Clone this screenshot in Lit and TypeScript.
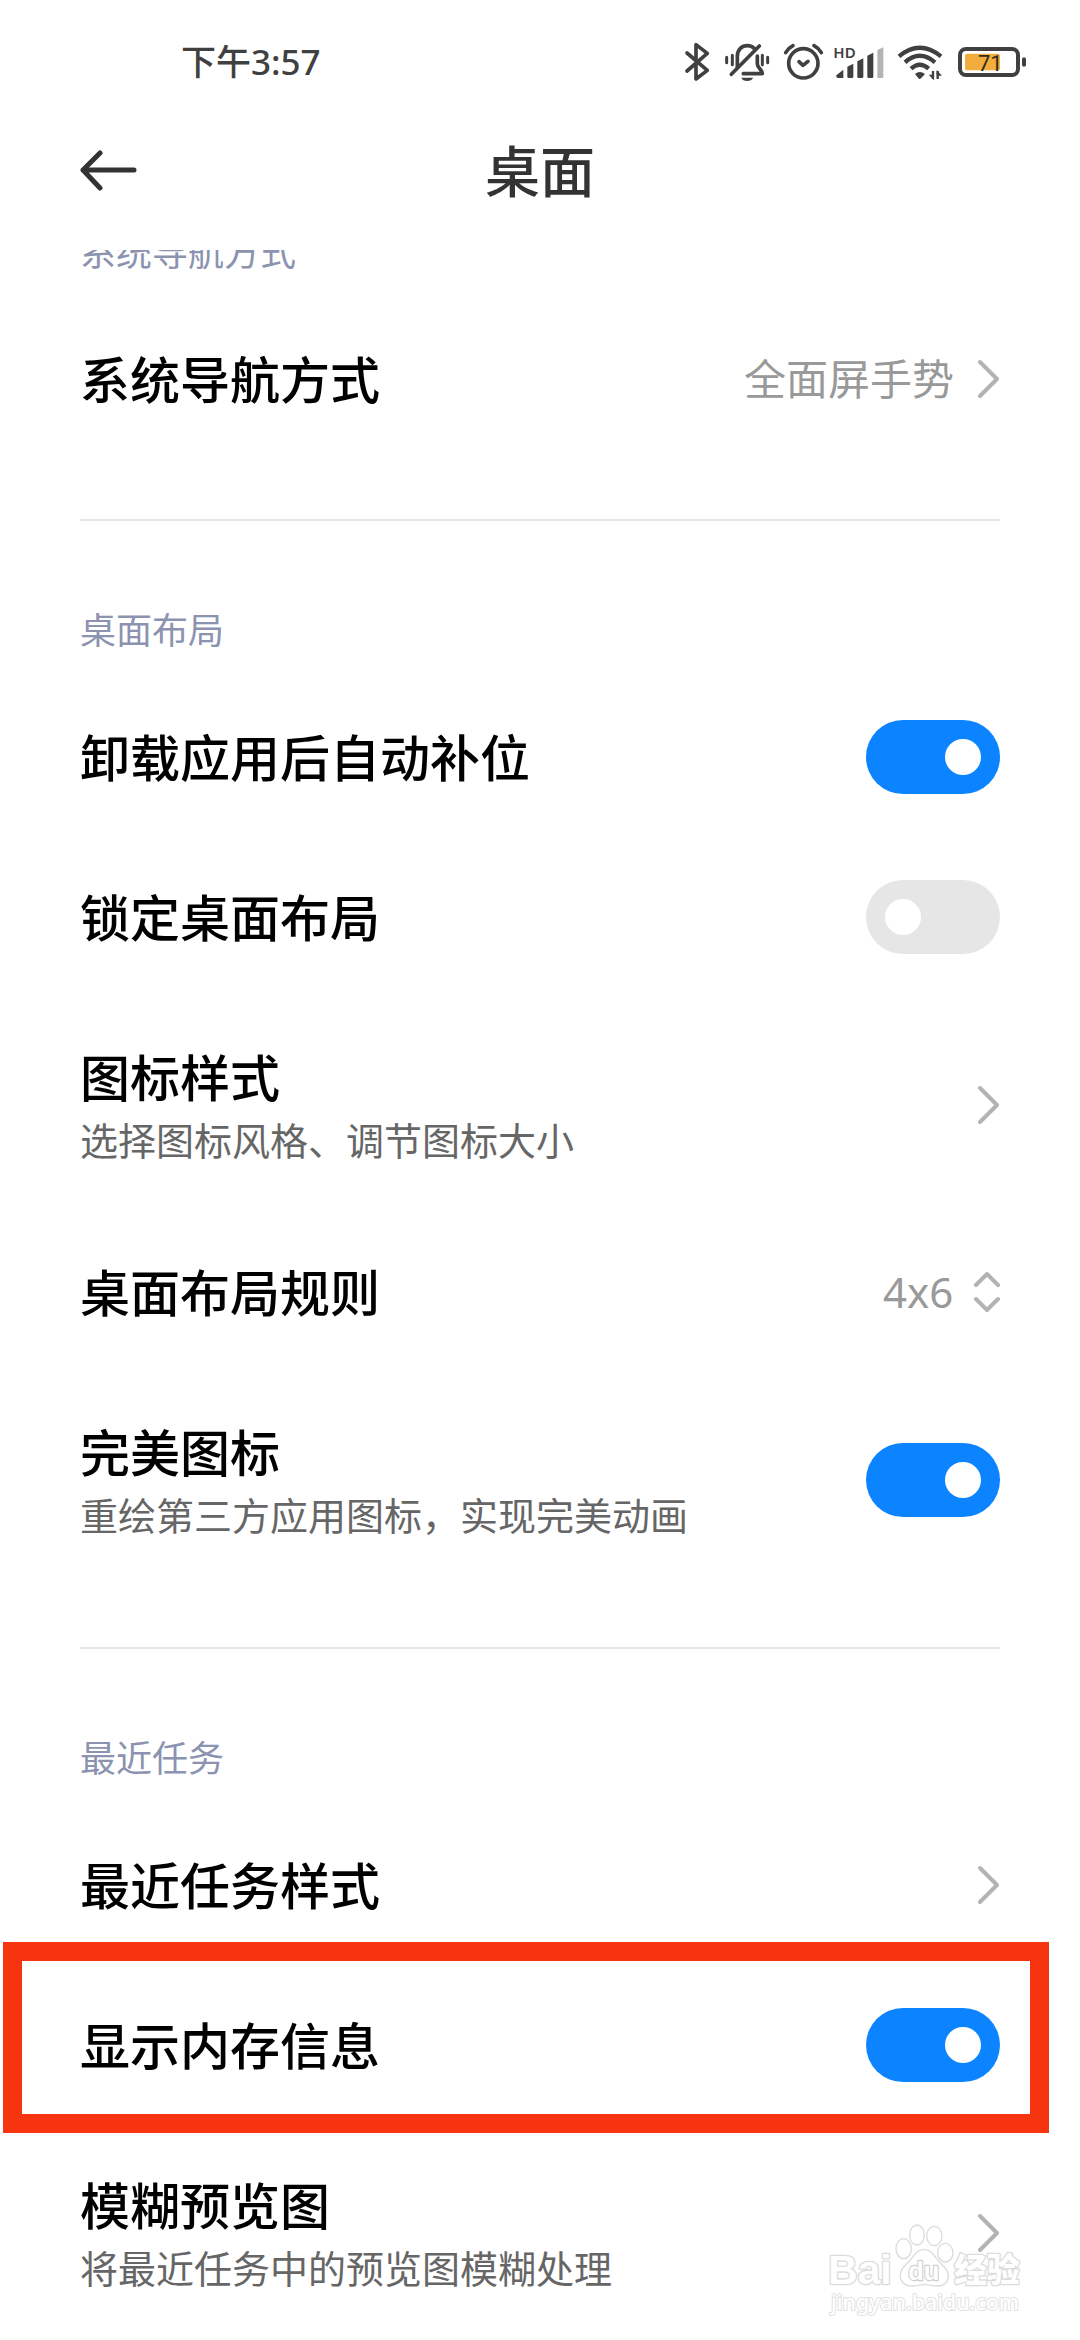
import { LitElement, html, css, svg, nothing, TemplateResult } from "lit";
import { customElement, state } from "lit/decorators.js";

type Row = {
  id: string;
  title: string;
  note?: string;
  kind: "link" | "switch" | "select";
  value?: string;
  marked?: boolean;
};

type Section = { title: string; rows: Row[] };

const SECTIONS: Section[] = [
  {
    title: "系统导航方式",
    rows: [{ id: "navigation", title: "系统导航方式", kind: "link", value: "全面屏手势" }],
  },
  {
    title: "桌面布局",
    rows: [
      { id: "autofill", title: "卸载应用后自动补位", kind: "switch" },
      { id: "lock", title: "锁定桌面布局", kind: "switch" },
      { id: "icons", title: "图标样式", note: "选择图标风格、调节图标大小", kind: "link" },
      { id: "grid", title: "桌面布局规则", kind: "select", value: "4x6" },
      { id: "perfect", title: "完美图标", note: "重绘第三方应用图标，实现完美动画", kind: "switch" },
    ],
  },
  {
    title: "最近任务",
    rows: [
      { id: "recents", title: "最近任务样式", kind: "link" },
      { id: "memory", title: "显示内存信息", kind: "switch", marked: true },
      { id: "blur", title: "模糊预览图", note: "将最近任务中的预览图模糊处理", kind: "link" },
    ],
  },
];

@customElement("status-bar")
export class StatusBar extends LitElement {
  static styles = css`
    :host {
      display: flex;
      align-items: center;
      justify-content: space-between;
      height: 124px;
      padding: 0 53px 0 181px;
      color: #404040;
      font: 500 35px/48px "Noto Sans", "Noto Sans CJK SC", sans-serif;
    }
    .icons {
      display: flex;
      gap: 10px;
    }
    .icon {
      display: block;
      height: 44px;
      fill: none;
      stroke: #404040;
      stroke-width: 11;
      stroke-linecap: round;
      stroke-linejoin: round;
    }
    .solid {
      fill: #404040;
      stroke: none;
    }
    .faint {
      fill: #b4b4b4;
      stroke: none;
    }
    .charge {
      fill: #f2ae3c;
      stroke: none;
    }
    .hd {
      fill: #404040;
      stroke: none;
      font: 600 45px "Noto Sans", sans-serif;
    }
    .level {
      fill: #302a20;
      stroke: none;
      font: 400 66px Roboto, sans-serif;
    }
  `;

  render() {
    return html`
      <time>下午3:57</time>
      <div class="icons">
        <svg class="icon" width="30" viewBox="69 60 90 132" aria-label="蓝牙">
          <path d="M81 99 L142 151 L108 177 V74 L142 100 L81 153" />
        </svg>
        <svg class="icon" width="50" viewBox="189 60 150 132" aria-label="静音">
          <path d="M232 142 V110 C232 88 246 77 262 77 C271 77 278 80 283 86" />
          <path d="M292 108 V132 C292 144 308 150 307 161 H250" />
          <path d="M214 163 L298 78" />
          <path d="M200 112 V128 M217 106 V134 M307 106 V134 M323 112 V128" stroke-width="9" />
          <path class="solid" d="M244 173 H279 C275 186 248 186 244 173 Z" />
        </svg>
        <svg class="icon" width="41" viewBox="369 60 123 132" aria-label="闹钟">
          <circle cx="430" cy="130" r="44" />
          <path d="M417 125 L429 136 L444 124" />
          <path d="M377 98 Q385 84 399 77 M462 77 Q476 84 484 98" />
        </svg>
        <svg class="icon" width="52" viewBox="522 60 156 132" aria-label="信号">
          <text class="hd" x="520" y="113">HD</text>
          <path class="solid" d="M529 166 L550 149 V174 H534 Q529 174 529 169 Z" />
          <path class="solid" d="M562 140 L580 131 V170 Q580 174 576 174 H566 Q562 174 562 170 Z" />
          <path class="solid" d="M592 124 L610 115 V170 Q610 174 606 174 H596 Q592 174 592 170 Z" />
          <path class="solid" d="M622 107 L640 98 V170 Q640 174 636 174 H626 Q622 174 622 170 Z" />
          <path class="faint" d="M652 92 Q652 90 654 89 L670 82 V170 Q670 174 666 174 H656 Q652 174 652 170 Z" />
        </svg>
        <svg class="icon" width="50" viewBox="708 60 150 132" aria-label="无线网络">
          <path d="M717 109 Q779 57 843 109" stroke-linecap="butt" stroke-width="13" />
          <path d="M735 127 Q779 88 825 127" stroke-linecap="butt" stroke-width="13" />
          <path d="M753 146 Q779 122 806 146" stroke-linecap="butt" stroke-width="13" />
          <path class="solid" d="M765 162 Q779 150 795 162 L783 175 Q779 179 775 175 Z" />
          <path d="M819 153 V177 M833 153 V177" stroke-width="7" stroke-linecap="butt" />
          <path class="solid" d="M806 164 H822 V181 Z M830 150 L846 167 H830 Z" />
        </svg>
        <svg class="icon" width="71" viewBox="888 60 213 132" aria-label="电量">
          <rect x="900" y="87" width="174" height="78" rx="18" stroke-width="12" />
          <rect class="charge" x="915" y="101" width="105" height="50" rx="6" />
          <rect class="solid" x="1086" y="112" width="12" height="28" rx="6" />
          <text class="level" x="954" y="152">71</text>
        </svg>
      </div>
    `;
  }
}

@customElement("source-mark")
export class SourceMark extends LitElement {
  static styles = css`
    :host {
      display: block;
    }
    .mark {
      display: block;
      width: 200px;
      height: 96px;
      fill: #fff;
      stroke: #dcdcdc;
      stroke-width: 4;
      stroke-linejoin: round;
      overflow: visible;
    }
    .name {
      font: 700 122px "Liberation Sans", sans-serif;
      paint-order: stroke;
      stroke-width: 8;
    }
    .paw {
      font: 700 76px "Liberation Sans", sans-serif;
      paint-order: stroke;
      stroke: #cfcfcf;
      stroke-width: 7;
    }
    .topic {
      font: 900 98px "Noto Sans CJK SC", sans-serif;
      paint-order: stroke;
      stroke-width: 8;
    }
    .site {
      font: 500 64px "Noto Sans", sans-serif;
      paint-order: stroke;
      stroke: #e2e2e2;
      stroke-width: 6;
    }
  `;

  render() {
    return html`
      <svg class="mark" viewBox="76 126 600 288">
        <text class="name" x="80" y="312">Bai</text>
        <ellipse cx="306" cy="206" rx="23" ry="30" />
        <ellipse cx="346" cy="165" rx="22" ry="30" />
        <ellipse cx="398" cy="168" rx="23" ry="29" />
        <ellipse cx="431" cy="218" rx="23" ry="28" />
        <path
          d="M366 208 C348 208 338 224 326 240 C312 256 296 264 296 286 C296 306 310 318 330 318 C344 318 354 314 368 314 C382 314 392 318 408 318 C428 318 440 306 440 288 C440 264 420 256 408 240 C396 224 386 208 366 208 Z"
        />
        <text class="paw" x="320" y="301">du</text>
        <text class="topic" x="458" y="306">经验</text>
        <text class="site" x="88" y="391">jingyan.baidu.com</text>
      </svg>
    `;
  }
}

@customElement("app-root")
export class AppRoot extends LitElement {
  static styles = css`
    :host {
      display: flex;
      flex-direction: column;
      min-height: 100vh;
      position: relative;
      overflow: hidden;
      background: #fff;
      color: #000;
      font-family: "Noto Sans", "Noto Sans CJK SC", sans-serif;
    }
    .header {
      display: grid;
      grid-template-columns: 1fr auto 1fr;
      align-items: center;
      height: 94px;
      margin-bottom: 32px;
      padding: 0 80px;
      color: #333;
    }
    .back {
      display: block;
      justify-self: start;
      padding: 0;
      border: 0;
      background: none;
      color: inherit;
    }
    .glyph {
      display: block;
      fill: none;
      stroke: currentColor;
      stroke-linecap: round;
      stroke-linejoin: round;
    }
    .heading {
      margin: 0;
      font-size: 55px;
      line-height: 80px;
      font-weight: 500;
    }
    /* Only the part of the list below the header is visible. */
    .viewport {
      flex: 1;
      overflow: hidden;
    }
    .list {
      margin-top: -107px;
    }
    .section {
      padding-bottom: 60px;
    }
    .section:last-child {
      padding-bottom: 0;
    }
    .divider {
      height: 2px;
      margin: 0 80px;
      border: 0;
      background: #e5e5e5;
    }
    .caption {
      margin: 0;
      padding: 86px 80px 22px;
      color: #8c93b0;
      font-size: 36px;
      line-height: 48px;
      font-weight: 400;
    }
    .row {
      display: flex;
      align-items: center;
      box-sizing: border-box;
      width: 100%;
      padding: 0 80px;
      border: 0;
      background: none;
      color: inherit;
      font: inherit;
      text-align: left;
      position: relative;
    }
    .text {
      flex: 1;
      display: block;
      padding: 46px 0 44px;
    }
    .title {
      display: block;
      font-size: 50px;
      line-height: 70px;
      font-weight: 500;
    }
    .note {
      display: block;
      color: #666;
      font-size: 38px;
      line-height: 55px;
    }
    .value {
      appearance: none;
      margin: 0;
      padding: 0;
      border: 0;
      background: none;
      color: #999;
      font-family: inherit;
      font-size: 42px;
      line-height: 60px;
    }
    .end {
      margin-left: 18px;
      color: #b3b3b3;
    }
    .switch {
      appearance: none;
      display: flex;
      align-items: center;
      box-sizing: border-box;
      width: 134px;
      height: 74px;
      margin: 0;
      padding: 0 19px;
      border-radius: 37px;
      background: #e6e6e6;
    }
    .switch::before {
      content: "";
      width: 36px;
      height: 36px;
      border-radius: 50%;
      background: #fff;
    }
    .switch:checked {
      justify-content: flex-end;
      background: #0d84ff;
    }
    .marker {
      position: absolute;
      inset: -23px 31px -8px 3px;
      border: 19px solid #f63510;
      pointer-events: none;
    }
    .source {
      position: absolute;
      right: 53px;
      bottom: 22px;
      pointer-events: none;
    }
  `;

  @state() private on = new Set(["autofill", "perfect", "memory"]);

  private toggle(id: string) {
    const next = new Set(this.on);
    if (!next.delete(id)) next.add(id);
    this.on = next;
  }

  private chevron() {
    return html`<svg class="glyph end" width="28" height="40" viewBox="0 0 28 40" stroke-width="4">
      ${svg`<path d="M8 3 L25 20 L8 37" />`}
    </svg>`;
  }

  private stepper() {
    return html`<svg class="glyph end" width="28" height="44" viewBox="0 0 28 44" stroke-width="4">
      ${svg`<path d="M4 15 L15 4 L26 15 M4 29 L15 40 L26 29" />`}
    </svg>`;
  }

  private row(r: Row): TemplateResult {
    const note = r.note ? html`<span class="note">${r.note}</span>` : nothing;
    if (r.kind === "link") {
      return html`<button class="row" type="button">
        <span class="text"><span class="title">${r.title}</span>${note}</span>
        ${r.value ? html`<span class="value">${r.value}</span>` : nothing} ${this.chevron()}
      </button>`;
    }
    const control =
      r.kind === "select"
        ? html`<select class="value" id=${r.id}>
              <option>${r.value}</option>
            </select>
            ${this.stepper()}`
        : html`<input
            class="switch"
            type="checkbox"
            role="switch"
            id=${r.id}
            .checked=${this.on.has(r.id)}
            @change=${() => this.toggle(r.id)}
          />`;
    return html`<div class="row">
      <label class="text" for=${r.id}><span class="title">${r.title}</span>${note}</label>
      ${control} ${r.marked ? html`<div class="marker"></div>` : nothing}
    </div>`;
  }

  render() {
    return html`
      <status-bar></status-bar>
      <header class="header">
        <button class="back" type="button" aria-label="返回">
          <svg class="glyph" width="58" height="42" viewBox="0 0 58 42" stroke-width="5">
            <path d="M20 3 L3 20 L20 38 M3 20 H54" />
          </svg>
        </button>
        <h1 class="heading">桌面</h1>
      </header>
      <main class="viewport">
        <div class="list">
          ${SECTIONS.map(
            (s, i) => html`
              ${i > 0 ? html`<hr class="divider" />` : nothing}
              <section class="section">
                <h2 class="caption">${s.title}</h2>
                ${s.rows.map((r) => this.row(r))}
              </section>
            `,
          )}
        </div>
      </main>
      <source-mark class="source"></source-mark>
    `;
  }
}
